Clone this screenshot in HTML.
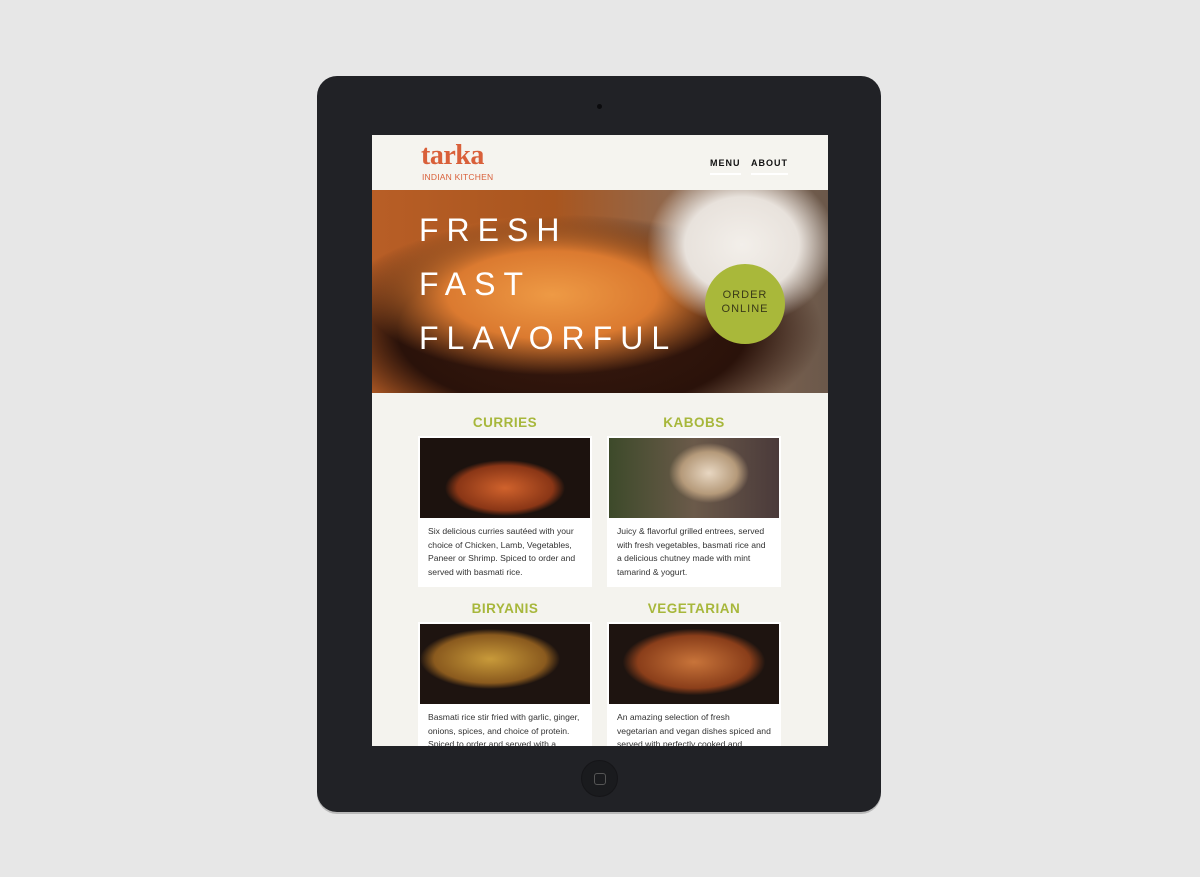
<!DOCTYPE html>
<html><head><style>
*{margin:0;padding:0;box-sizing:border-box}
body{width:1200px;height:877px;background:#e7e7e7;position:relative;overflow:hidden;font-family:"Liberation Sans",sans-serif}
.dev{position:absolute;left:317px;top:76px;width:564px;height:736px;background:#212226;border-radius:20px;box-shadow:0 2px 0 #b9b9b9}
.cam{position:absolute;left:597px;top:104px;width:5px;height:5px;border-radius:50%;background:#0b0b0d}
.home{position:absolute;left:581px;top:760px;width:37px;height:37px;border-radius:50%;background:#1a1b1e;border:1px solid #151518}
.home i{position:absolute;left:12px;top:12px;width:12px;height:12px;border:1.5px solid #555;border-radius:3px}
.scr{position:absolute;left:372px;top:135px;width:456px;height:611px;background:#f4f3ee;overflow:hidden}
.hdr{height:55px;background:#f5f4ef;position:relative}
.logo{position:absolute;left:49px;top:5px;color:#d9603a;font-family:"Liberation Serif",serif;font-weight:bold;font-size:28px;letter-spacing:-0.5px}
.sub{position:absolute;left:50px;top:37px;color:#d9603a;font-size:8.5px;letter-spacing:0.2px}
.nav{position:absolute;top:23px;font-size:9px;font-weight:bold;letter-spacing:1px;color:#111;border-bottom:2px solid #fff;padding-bottom:5px}
.hero{position:absolute;top:55px;left:0;width:456px;height:203px;overflow:hidden;
background:radial-gradient(ellipse 95px 80px at 370px 55px,#f3efea 0,#e8e2dc 60%,rgba(200,180,160,0) 100%),
radial-gradient(ellipse 190px 80px at 180px 105px,#ee9a45 0,#db7a30 55%,rgba(150,60,20,0) 100%),
radial-gradient(ellipse 250px 115px at 200px 140px,#3a1a0e 0,#2a120a 70%,rgba(0,0,0,0) 100%),
linear-gradient(90deg,#b85e26 0,#a9561f 40%,#8c6c56 70%,#6b584a 100%)}
.h{position:absolute;left:47px;color:#fff;font-size:32px;letter-spacing:8px;font-weight:normal}
.order{position:absolute;left:333px;top:74px;width:80px;height:80px;border-radius:50%;background:#a9b83a;color:#3a3a18;font-size:11px;letter-spacing:1px;text-align:center;padding-top:24px;line-height:14px}
.card{position:absolute;width:174px}
.t{text-align:center;color:#a7b73b;font-weight:bold;font-size:13.5px;letter-spacing:0.5px;height:21px}
.box{background:#fff;padding:2px}
.img{height:80px}
.txt{font-size:8.6px;line-height:13.5px;color:#333;padding:7px 8px 6px}
</style></head><body>
<div class="dev"></div><div class="cam"></div><div class="home"><i></i></div>
<div class="scr">
 <div class="hdr"><div class="logo">tarka</div><div class="sub">INDIAN KITCHEN</div>
 <div class="nav" style="left:338px">MENU</div><div class="nav" style="left:379px">ABOUT</div></div>
 <div class="hero">
  <div class="h" style="top:22px">FRESH</div>
  <div class="h" style="top:76px">FAST</div>
  <div class="h" style="top:130px">FLAVORFUL</div>
  <div class="order">ORDER<br>ONLINE</div>
 </div>
 <div class="card" style="left:46px;top:280px"><div class="t">CURRIES</div><div class="box"><div class="img" style="background:radial-gradient(ellipse 60px 28px at 85px 50px,#d0622c,#8a3616 80%,#1c120e 100%),linear-gradient(#c99233,#5a3a22)"></div><div class="txt">Six delicious curries sautéed with your choice of Chicken, Lamb, Vegetables, Paneer or Shrimp. Spiced to order and served with basmati rice.</div></div></div>
 <div class="card" style="left:235px;top:280px"><div class="t">KABOBS</div><div class="box"><div class="img" style="background:radial-gradient(ellipse 40px 30px at 100px 35px,#e8d7c2,#b59a7a 70%,rgba(0,0,0,0) 100%),linear-gradient(90deg,#3d4a2a,#6b5a4a 50%,#4a3a3a)"></div><div class="txt">Juicy &amp; flavorful grilled entrees, served with fresh vegetables, basmati rice and a delicious chutney made with mint tamarind &amp; yogurt.</div></div></div>
 <div class="card" style="left:46px;top:466px"><div class="t">BIRYANIS</div><div class="box"><div class="img" style="background:radial-gradient(ellipse 70px 30px at 70px 35px,#c89a3a,#8a5a1e 80%,#1e1410 100%),linear-gradient(#3a2a20,#b86a30)"></div><div class="txt">Basmati rice stir fried with garlic, ginger, onions, spices, and choice of protein. Spiced to order and served with a yogurt-</div></div></div>
 <div class="card" style="left:235px;top:466px"><div class="t">VEGETARIAN</div><div class="box"><div class="img" style="background:radial-gradient(ellipse 75px 35px at 85px 38px,#c8743a,#8a3e1a 75%,#1e1410 95%),#b25a28"></div><div class="txt">An amazing selection of fresh vegetarian and vegan dishes spiced and served with perfectly cooked and</div></div></div>
</div>
</body></html>
